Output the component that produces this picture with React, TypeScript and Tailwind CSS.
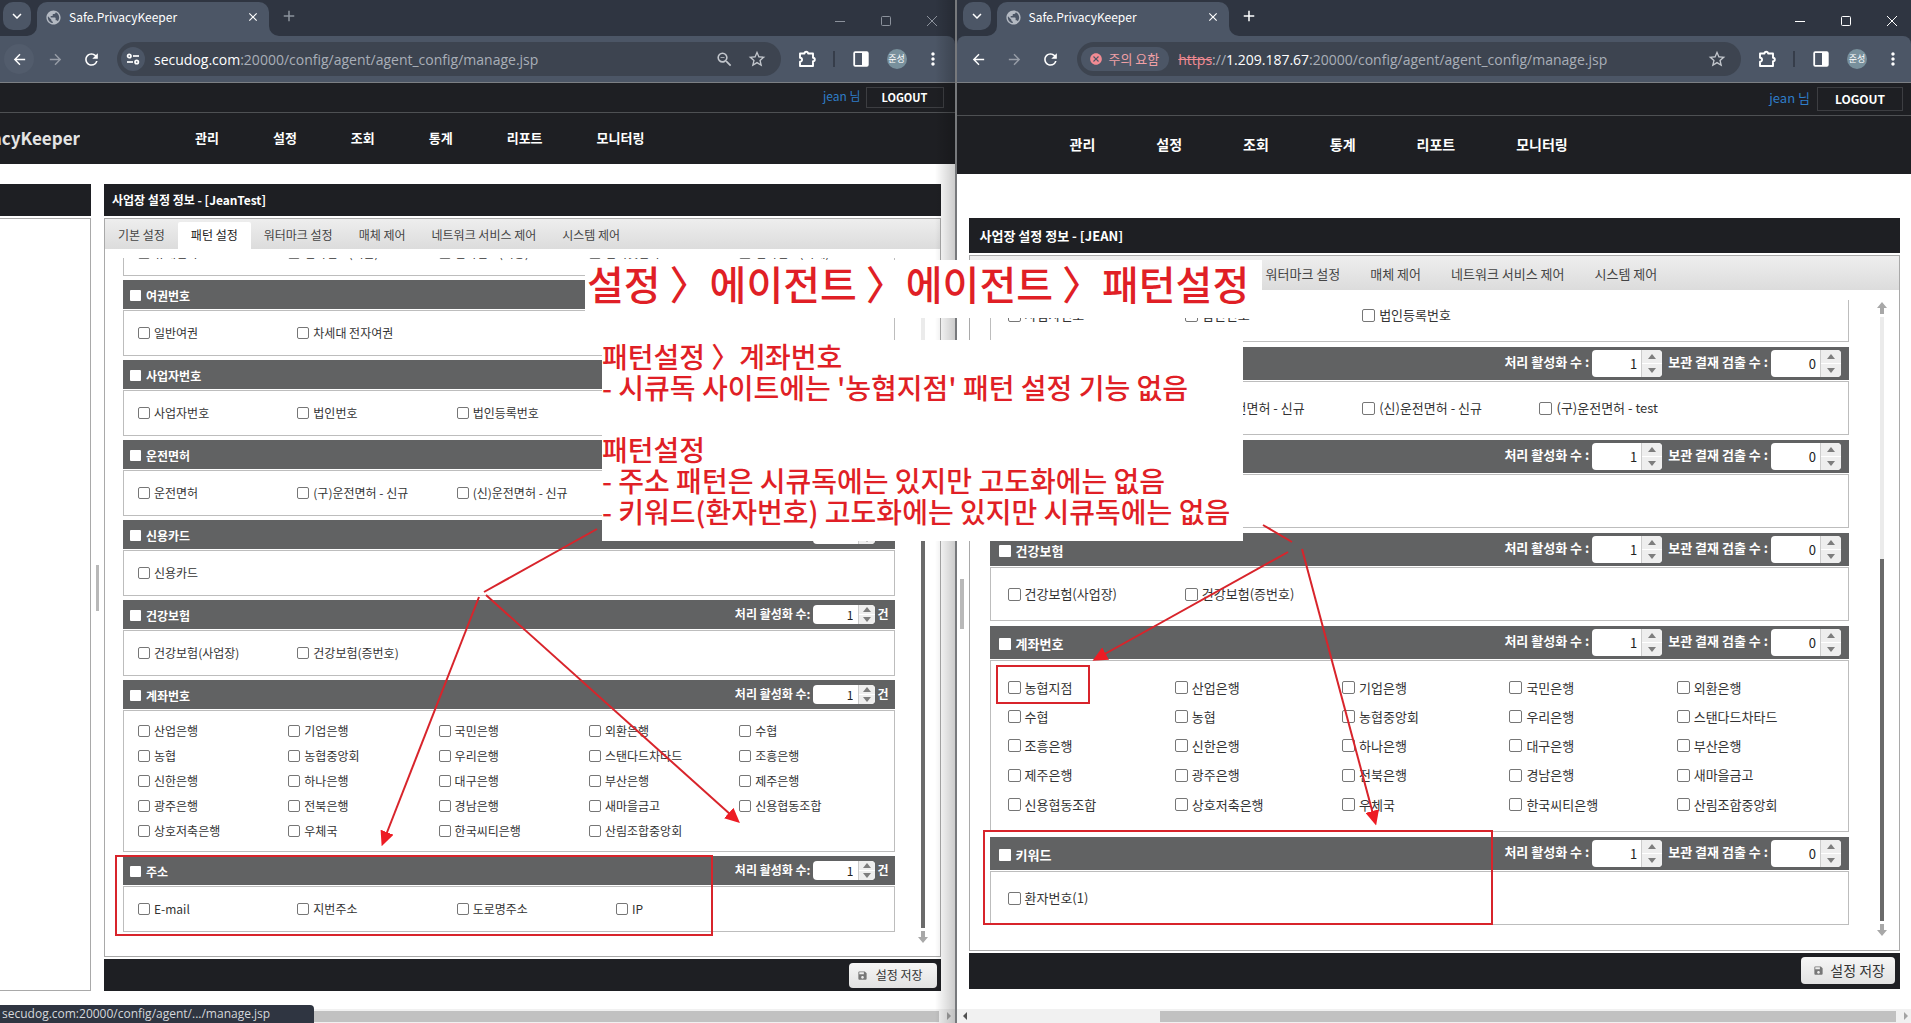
import type { ReactNode } from "react";
import clsx from "clsx";
import {
  MdAdd,
  MdArrowBack,
  MdArrowForward,
  MdCancel,
  MdClose,
  MdKeyboardArrowDown,
  MdMoreVert,
  MdPublic,
  MdRefresh,
  MdSave,
  MdStarOutline,
  MdZoomOut,
} from "react-icons/md";

type Variant = "old" | "next";

type Section = {
  title?: string;
  items: string[];
  columns: 4 | 5;
};

// "old" = secudog, "next" = 고도화 (조금 더 큰 배율)
const skins = {
  old: {
    userBar: "h-[30px]",
    user: "text-[12px] pb-1",
    logout: "h-[21px] w-[78px] text-[11px]",
    userPad: "pr-[11px] gap-[5px]",
    nav: "h-[51px] gap-[54px] text-[13px] pl-[115px]",
    main: "pt-5 pb-[18px] pr-[14px]",
    bar: "h-8",
    title: "px-2 text-[12px]",
    tabBar: "h-[30px] pt-[3px] text-[12px]",
    tab: "px-[13px]",
    list: "mt-[9px] pb-6 pl-[18px]",
    scroll: "w-[45px] pr-[12px] pb-[13px] pt-2",
    sectionHead: "h-[29px] text-[12px] pl-[7px] pr-[6px]",
    headBox: "size-[11px]",
    box: "text-[12px] pl-[14px] pr-1",
    row: "h-[46px]",
    bigRow: "h-[142px] py-2",
    check: "size-3",
    gap: "mb-1",
    spinner: "h-[19px] w-[62px]",
    spinText: "text-[12px] pr-[5px]",
    spinBtns: "w-[17px]",
    footer: "h-8 items-center pr-1",
    save: "h-[25px] pl-2 pr-[14px] gap-2 text-[12px]",
    splitter: "h-[46px] w-[3px]",
  },
  next: {
    userBar: "h-[33px]",
    user: "text-[13px] pb-[2px]",
    logout: "h-6 w-[86px] text-[12px]",
    userPad: "pr-2 gap-[7px]",
    nav: "h-[58px] gap-[61px] text-[14px] pl-[113px]",
    main: "pt-11 pb-5 pr-[11px]",
    bar: "h-[35px]",
    title: "px-[11px] text-[13px]",
    tabBar: "h-[34px] pt-1 text-[13px]",
    tab: "px-[15px]",
    list: "mt-[10px] pb-[25px] pl-5",
    scroll: "w-[50px] pr-[12px] pb-[14px] pt-1",
    sectionHead: "h-[33px] text-[13px] pl-[9px] pr-2",
    headBox: "size-3",
    box: "text-[13px] pl-[17px] pr-1",
    row: "h-[54px]",
    bigRow: "h-[172px] py-3",
    check: "size-[13px]",
    gap: "mb-[5px]",
    spinner: "h-[27px] w-[70px]",
    spinText: "text-[13px] pr-1",
    spinBtns: "w-[21px]",
    footer: "h-9 items-start pr-[5px] pt-1",
    save: "h-[27px] pl-3 pr-[10px] gap-[6px] text-[14px]",
    splitter: "h-[50px] w-1",
  },
};

const menus = ["관리", "설정", "조회", "통계", "리포트", "모니터링"];

const oldTabs = ["기본 설정", "패턴 설정", "워터마크 설정", "매체 제어", "네트워크 서비스 제어", "시스템 제어"];
const nextTabs = [
  "기본 설정",
  "사용자 패턴 설정",
  "패턴 설정",
  "워터마크 설정",
  "매체 제어",
  "네트워크 서비스 제어",
  "시스템 제어",
];

const oldSections: Section[] = [
  { items: ["휴대전화", "전화번호(서울)", "전화번호(지방)", "인터넷전화", "전화번호(국제)"], columns: 5 },
  { title: "여권번호", items: ["일반여권", "차세대 전자여권"], columns: 4 },
  { title: "사업자번호", items: ["사업자번호", "법인번호", "법인등록번호"], columns: 4 },
  { title: "운전면허", items: ["운전면허", "(구)운전면허 - 신규", "(신)운전면허 - 신규"], columns: 4 },
  { title: "신용카드", items: ["신용카드"], columns: 4 },
  { title: "건강보험", items: ["건강보험(사업장)", "건강보험(증번호)"], columns: 4 },
  {
    title: "계좌번호",
    columns: 5,
    items: [
      "산업은행", "기업은행", "국민은행", "외환은행", "수협",
      "농협", "농협중앙회", "우리은행", "스탠다드차타드", "조흥은행",
      "신한은행", "하나은행", "대구은행", "부산은행", "제주은행",
      "광주은행", "전북은행", "경남은행", "새마을금고", "신용협동조합",
      "상호저축은행", "우체국", "한국씨티은행", "산림조합중앙회",
    ],
  },
  { title: "주소", items: ["E-mail", "지번주소", "도로명주소", "IP"], columns: 4 },
];

const nextSections: Section[] = [
  { items: ["사업자번호", "법인번호", "법인등록번호"], columns: 4 },
  {
    title: "운전면허",
    items: ["운전면허", "(구)운전면허 - 신규", "(신)운전면허 - 신규", "(구)운전면허 - test"],
    columns: 4,
  },
  { title: "신용카드", items: ["신용카드"], columns: 4 },
  { title: "건강보험", items: ["건강보험(사업장)", "건강보험(증번호)"], columns: 4 },
  {
    title: "계좌번호",
    columns: 5,
    items: [
      "농협지점", "산업은행", "기업은행", "국민은행", "외환은행",
      "수협", "농협", "농협중앙회", "우리은행", "스탠다드차타드",
      "조흥은행", "신한은행", "하나은행", "대구은행", "부산은행",
      "제주은행", "광주은행", "전북은행", "경남은행", "새마을금고",
      "신용협동조합", "상호저축은행", "우체국", "한국씨티은행", "산림조합중앙회",
    ],
  },
  { title: "키워드", items: ["환자번호(1)"], columns: 4 },
];

function TabFoot({ flip }: { flip?: boolean }) {
  return (
    <svg
      viewBox="0 0 10 10"
      className={clsx("absolute bottom-0 size-[10px] text-[#4c5666]", flip ? "left-full -scale-x-100" : "right-full")}
    >
      <path d="M10 0v10H0A10 10 0 0 0 10 0z" fill="currentColor" />
    </svg>
  );
}

function IconButton({ label, className, children }: { label: string; className?: string; children: ReactNode }) {
  return (
    <button type="button" aria-label={label} className={clsx("flex shrink-0 items-center justify-center", className)}>
      {children}
    </button>
  );
}

function BrowserChrome({ variant }: { variant: Variant }) {
  const old = variant === "old";
  const dim = old ? "text-[#8c929c]" : "text-white";

  return (
    <div className="shrink-0 bg-[#2f3541]">
      {/* 탭 줄 */}
      <div className={clsx("flex h-9 items-end", old ? "pl-[3px] pr-1" : "pl-[6px]")}>
        <IconButton label="탭 검색" className="mb-[6px] size-7 rounded-[10px] bg-[#4c5666] text-white">
          <MdKeyboardArrowDown className="size-[18px]" />
        </IconButton>
        <div className="relative ml-[6px] flex h-[34px] w-[232px] items-center rounded-t-[10px] bg-[#4c5666] pl-2 pr-[9px] pb-1">
          <TabFoot />
          <MdPublic className="size-[17px] text-[#b4bac3]" />
          <span className="ml-[7px] flex-1 text-[12px] text-white">Safe.PrivacyKeeper</span>
          <IconButton label="탭 닫기" className="text-white">
            <MdClose className="size-[14px]" />
          </IconButton>
          <TabFoot flip />
        </div>
        <IconButton label="새 탭" className={clsx("mb-[11px] ml-[11px]", dim)}>
          <MdAdd className="size-[18px]" />
        </IconButton>
        <div className={clsx("ml-auto flex h-[30px] items-center gap-[34px] pr-[13px]", dim)}>
          <IconButton label="최소화" className="size-3">
            <svg viewBox="0 0 12 12" className="size-3" fill="none" stroke="currentColor">
              <path d="M1 6.5h10" />
            </svg>
          </IconButton>
          <IconButton label="최대화" className="size-3">
            <svg viewBox="0 0 12 12" className="size-3" fill="none" stroke="currentColor">
              <rect x="1.5" y="1.5" width="9" height="9" rx="1" />
            </svg>
          </IconButton>
          <IconButton label="닫기" className="size-3">
            <svg viewBox="0 0 12 12" className="size-3" fill="none" stroke="currentColor">
              <path d="M1 1l10 10M11 1L1 11" />
            </svg>
          </IconButton>
        </div>
      </div>

      {/* 주소 줄 */}
      <div
        className={clsx(
          "flex h-[47px] items-center border-b border-[#7c7f84] bg-[#4c5666] text-white",
          old ? "rounded-tr-[8px] pl-1 pr-3" : "rounded-t-[8px] pl-[7px] pr-2"
        )}
      >
        <IconButton label="뒤로" className={clsx("size-[30px] rounded-full", old && "bg-[#525c6c]")}>
          <MdArrowBack className="size-[17px]" />
        </IconButton>
        <IconButton label="앞으로" className="ml-[6px] size-[30px] text-[#979da7]">
          <MdArrowForward className="size-[17px]" />
        </IconButton>
        <IconButton label="새로고침" className="ml-[6px] size-[30px]">
          <MdRefresh className="size-[19px]" />
        </IconButton>

        <div className="ml-[11px] flex h-[34px] flex-1 items-center rounded-full bg-[#3d4450] pl-1 pr-[14px]">
          {old ? (
            <IconButton label="사이트 정보" className="size-6 rounded-full bg-[#4c5666]">
              <svg viewBox="0 0 14 14" className="size-[14px]" fill="none" stroke="currentColor" strokeWidth="1.7">
                <circle cx="3.3" cy="4" r="1.7" />
                <path d="M7 4h6" />
                <circle cx="10.7" cy="10" r="1.7" />
                <path d="M1 10h6" />
              </svg>
            </IconButton>
          ) : (
            <button
              type="button"
              className="flex h-6 items-center gap-[6px] rounded-full bg-[#4c5666] pl-2 pr-[10px] text-[13px] text-[#f0a0a6]"
            >
              <MdCancel className="size-[14px] text-[#f28b93]" />
              주의 요함
            </button>
          )}
          <span className="ml-[9px] flex-1 whitespace-nowrap font-['Open_Sans','Noto_Sans',sans-serif] text-[14px] text-[#a9afb8]">
            {old ? (
              <>
                <span className="text-white">secudog.com</span>:20000/config/agent/agent_config/manage.jsp
              </>
            ) : (
              <>
                <span className="text-[#f28b93] line-through">https</span>://
                <span className="text-white">1.209.187.67</span>:20000/config/agent/agent_config/manage.jsp
              </>
            )}
          </span>
          {old && (
            <IconButton label="축소" className="mr-[13px] text-[#c3c7cd]">
              <MdZoomOut className="size-[19px]" />
            </IconButton>
          )}
          <IconButton label="북마크" className="text-[#c3c7cd]">
            <MdStarOutline className="size-[20px]" />
          </IconButton>
        </div>

        <IconButton label="확장 프로그램" className="ml-4">
          <svg viewBox="0 0 20 20" className="size-5" fill="none" stroke="currentColor" strokeWidth="1.9" strokeLinejoin="round">
            <path d="M3 4.5h4.5a1.8 1.8 0 0 1 3.6 0H16v4.2a1.8 1.8 0 0 1 0 3.6V17H3v-4.2a2 2 0 0 0 0-4.1z" />
          </svg>
        </IconButton>
        <span className="ml-4 h-4 w-[2px] bg-[#363d4a]" />
        <IconButton label="측면 패널" className="ml-[18px]">
          <svg viewBox="0 0 16 16" className="size-4">
            <rect x="1.2" y="1.2" width="13.6" height="13.6" rx="1" fill="none" stroke="currentColor" strokeWidth="1.8" />
            <path d="M9 1h6v14H9z" fill="currentColor" />
          </svg>
        </IconButton>
        <button type="button" className="ml-[18px] flex size-5 items-center justify-center rounded-full bg-[#78909c]">
          <span className="whitespace-nowrap text-[9px]">준성</span>
        </button>
        <IconButton label="메뉴" className="ml-4">
          <MdMoreVert className="size-5" />
        </IconButton>
      </div>
    </div>
  );
}

function Spinner({ variant, label, value }: { variant: Variant; label: string; value: string }) {
  const s = skins[variant];
  return (
    <label className="flex items-center gap-[3px]">
      <span className={variant === "old" ? "pb-[2px]" : "pb-1"}>{label}</span>
      <span className={clsx("flex overflow-hidden rounded-[4px] bg-white", s.spinner)}>
        <input
          type="text"
          inputMode="numeric"
          defaultValue={value}
          className={clsx("w-0 flex-1 text-right font-normal text-[#222] outline-none", s.spinText)}
        />
        <span className={clsx("flex flex-col border-l border-[#ccc] bg-[#eeeeee] text-[#7d7d7d]", s.spinBtns)}>
          <button type="button" aria-label="증가" className="flex flex-1 items-center justify-center border-b border-white">
            <svg viewBox="0 0 8 5" className="h-[5px] w-2">
              <path d="M4 0l4 5H0z" fill="currentColor" />
            </svg>
          </button>
          <button type="button" aria-label="감소" className="flex flex-1 items-center justify-center">
            <svg viewBox="0 0 8 5" className="h-[5px] w-2">
              <path d="M4 5l4-5H0z" fill="currentColor" />
            </svg>
          </button>
        </span>
      </span>
    </label>
  );
}

function PatternSection({ variant, section }: { variant: Variant; section: Section }) {
  const s = skins[variant];
  const big = section.items.length > 5;

  return (
    <section className={clsx("last:mb-0", s.gap)}>
      {section.title && (
        <div className={clsx("mb-px flex items-center justify-between bg-[#616263] font-bold text-white", s.sectionHead)}>
          <label className="flex items-center gap-[5px] pt-[2px]">
            <input type="checkbox" className={clsx("appearance-none rounded-[1px] bg-white", s.headBox)} />
            {section.title}
          </label>
          {variant === "old" ? (
            <div className="flex items-center gap-[2px]">
              <Spinner variant={variant} label="처리 활성화 수:" value="1" />
              <span className="pb-[2px]">건</span>
            </div>
          ) : (
            <div className="flex items-center gap-[6px]">
              <Spinner variant={variant} label="처리 활성화 수 :" value="1" />
              <Spinner variant={variant} label="보관 결재 검출 수 :" value="0" />
            </div>
          )}
        </div>
      )}
      <div
        className={clsx(
          "grid auto-rows-fr items-center border border-[#bdbdbd] text-[#333]",
          section.columns === 5 ? "grid-cols-[repeat(5,20%)]" : "grid-cols-[repeat(4,21.2%)]",
          s.box,
          big ? s.bigRow : s.row
        )}
      >
        {section.items.map((item) => (
          <label key={item} className="flex items-center gap-1 whitespace-nowrap">
            <input
              type="checkbox"
              className={clsx("appearance-none rounded-[2px] border border-[#767676] bg-white", s.check)}
            />
            {item}
          </label>
        ))}
      </div>
    </section>
  );
}

function ScrollArrow({ up }: { up?: boolean }) {
  return (
    <svg viewBox="0 0 10 12" className={clsx("h-3 w-[10px] shrink-0 text-[#a8a8a8]", up && "rotate-180")}>
      <path d="M3 0h4v6h3l-5 6-5-6h3z" fill="currentColor" />
    </svg>
  );
}

function ConsolePage({ variant }: { variant: Variant }) {
  const s = skins[variant];
  const old = variant === "old";
  const tabs = old ? oldTabs : nextTabs;
  const sections = old ? oldSections : nextSections;

  return (
    <div className="flex min-h-0 flex-1 flex-col bg-white">
      <header className="shrink-0 bg-[#1e1f23] text-white">
        <div className={clsx("flex items-center justify-end border-b border-[#4e5053]", s.userBar, s.userPad)}>
          <span className={clsx("text-[#2f7dc8]", s.user)}>jean 님</span>
          <button type="button" className={clsx("border border-[#3d3e42] font-bold", s.logout)}>
            LOGOUT
          </button>
        </div>
        <div className="flex">
          {old && (
            <div className="flex w-20 items-center justify-end overflow-hidden pb-[2px] text-[17px] font-bold text-[#e4e4e4]">
              PrivacyKeeper
            </div>
          )}
          <nav className={clsx("flex items-center whitespace-nowrap pb-px font-bold", s.nav)}>
            {menus.map((m) => (
              <a key={m} href={`#${m}`}>
                {m}
              </a>
            ))}
          </nav>
        </div>
      </header>

      <main className={clsx("flex min-h-0 flex-1", s.main)}>
        {old && (
          <aside className="flex w-[91px] shrink-0 flex-col gap-[2px]">
            <div className="h-8 shrink-0 bg-[#1e1f23]" />
            <div className="flex-1 border border-l-0 border-[#a9a9a9]" />
          </aside>
        )}
        <div className={clsx("flex shrink-0 items-center", old ? "w-[13px] pl-[5px]" : "w-3 pl-[3px]")}>
          <div className={clsx("bg-[#b8b8b8]", s.splitter)} />
        </div>

        <div className="flex min-w-0 flex-1 flex-col gap-[2px]">
          <h1 className={clsx("flex shrink-0 items-center bg-[#1e1f23] font-bold text-white", s.bar, s.title)}>
            사업장 설정 정보 - [{old ? "JeanTest" : "JEAN"}]
          </h1>

          <div className="flex min-h-0 flex-1 flex-col border border-[#a9a9a9]">
            <div
              className={clsx(
                "flex shrink-0 items-stretch bg-linear-to-b from-[#eeeeee] to-[#dcdcdc] text-[#444]",
                s.tabBar
              )}
            >
              {tabs.map((t) => (
                <button
                  key={t}
                  type="button"
                  className={clsx(
                    "whitespace-nowrap pb-[2px]",
                    s.tab,
                    t === "패턴 설정" && "rounded-t-[2px] bg-white text-[#222]"
                  )}
                >
                  {t}
                </button>
              ))}
            </div>

            <div className="flex min-h-0 flex-1">
              <div className={clsx("flex min-w-0 flex-1 flex-col justify-end overflow-hidden", s.list)}>
                <div className="shrink-0">
                  {sections.map((sec) => (
                    <PatternSection key={sec.title ?? "top"} variant={variant} section={sec} />
                  ))}
                </div>
              </div>
              <div className={clsx("flex flex-col items-end", s.scroll)}>
                <div className="flex flex-1 flex-col items-center gap-[3px] pt-2">
                  <ScrollArrow up />
                  <div className="flex w-1 flex-1 flex-col justify-end bg-[#ebebeb]">
                    <div className="h-3/5 bg-[#6b6b6b]" />
                  </div>
                  <ScrollArrow />
                </div>
              </div>
            </div>
          </div>

          <footer className={clsx("flex shrink-0 justify-end bg-[#1e1f23]", s.footer)}>
            <button
              type="button"
              className={clsx(
                "flex items-center rounded-[4px] bg-linear-to-b from-[#f6f6f6] to-[#e2e2e2] text-[#333]",
                s.save
              )}
            >
              <MdSave className="size-[11px] text-[#777]" />
              설정 저장
            </button>
          </footer>
        </div>
      </main>

      {/* 가로 스크롤 */}
      <div className="flex h-[14px] shrink-0 items-center bg-[#f1f1f1]">
        {!old && (
          <svg viewBox="0 0 4 8" className="ml-[6px] h-2 w-1 text-[#505050]">
            <path d="M4 0v8L0 4z" fill="currentColor" />
          </svg>
        )}
        <div className={clsx("h-[11px] flex-1 bg-[#c1c1c1]", !old && "ml-[193px]")} />
        <svg viewBox="0 0 4 8" className={clsx("ml-2 h-2 w-1 text-[#a3a3a3]", old ? "mr-1" : "mr-[3px]")}>
          <path d="M0 0v8l4-4z" fill="currentColor" />
        </svg>
      </div>
    </div>
  );
}

const boxes = [
  { x: 116, y: 856, w: 596, h: 79 },
  { x: 997, y: 666, w: 92, h: 37 },
  { x: 984, y: 831, w: 508, h: 93 },
];

const lines = [
  { from: [597, 529], to: [484, 592], arrow: false },
  { from: [479, 597], to: [386, 835], arrow: true },
  { from: [486, 595], to: [731, 815], arrow: true },
  { from: [1263, 525], to: [1292, 542], arrow: false },
  { from: [1288, 552], to: [1103, 655], arrow: true },
  { from: [1302, 549], to: [1373, 814], arrow: true },
];

function Annotations() {
  return (
    <>
      <div className="absolute left-[585px] top-[260px] h-[58px] w-[677px] bg-white pl-[2px]">
        <p className="whitespace-nowrap text-[40px] font-medium leading-[46px] text-[#e01f26]">
          설정 〉에이전트 〉에이전트 〉패턴설정
        </p>
      </div>
      <div className="absolute left-[602px] top-[340px] h-[201px] w-[641px] whitespace-nowrap bg-white pt-px text-[28px] font-medium leading-[31px] text-[#e01f26]">
        <p>패턴설정 〉계좌번호</p>
        <p>- 시큐독 사이트에는 '농협지점' 패턴 설정 기능 없음</p>
        <p className="mt-[31px]">패턴설정</p>
        <p>- 주소 패턴은 시큐독에는 있지만 고도화에는 없음</p>
        <p>- 키워드(환자번호) 고도화에는 있지만 시큐독에는 없음</p>
      </div>
      <svg className="pointer-events-none absolute inset-0 size-full" fill="none" stroke="#d8242b" strokeWidth="2">
        <defs>
          <marker id="tip" viewBox="0 0 15 14" refX="3" refY="7" markerWidth="15" markerHeight="14" markerUnits="userSpaceOnUse" orient="auto">
            <path d="M0 0l15 7-15 7z" fill="#ed1c24" stroke="none" />
          </marker>
        </defs>
        {boxes.map((b) => (
          <rect key={b.x} x={b.x} y={b.y} width={b.w} height={b.h} />
        ))}
        {lines.map((l) => (
          <line
            key={l.from[0]}
            x1={l.from[0]}
            y1={l.from[1]}
            x2={l.to[0]}
            y2={l.to[1]}
            markerEnd={l.arrow ? "url(#tip)" : undefined}
          />
        ))}
      </svg>
    </>
  );
}

export default function App() {
  return (
    <div className="relative flex h-screen overflow-hidden bg-[#2f3541] font-['Noto_Sans_CJK_KR','Noto_Sans',sans-serif]">
      <div className="relative flex min-w-0 flex-1 flex-col">
        <BrowserChrome variant="old" />
        <ConsolePage variant="old" />
        {/* 오른쪽 창 그림자 */}
        <div className="pointer-events-none absolute inset-y-0 right-0 w-5 bg-linear-to-r from-transparent to-black/20" />
        <div className="absolute bottom-0 left-0 h-[18px] w-[314px] rounded-tr-[4px] bg-[#2f3541] pl-[2px] font-['Open_Sans','Noto_Sans',sans-serif] text-[12px] leading-[18px] text-[#d5d8dc]">
          secudog.com:20000/config/agent/.../manage.jsp
        </div>
      </div>
      <div className="w-[2px] shrink-0 bg-[#77797c]" />
      <div className="flex min-w-0 flex-1 flex-col">
        <BrowserChrome variant="next" />
        <ConsolePage variant="next" />
      </div>
      <Annotations />
    </div>
  );
}
